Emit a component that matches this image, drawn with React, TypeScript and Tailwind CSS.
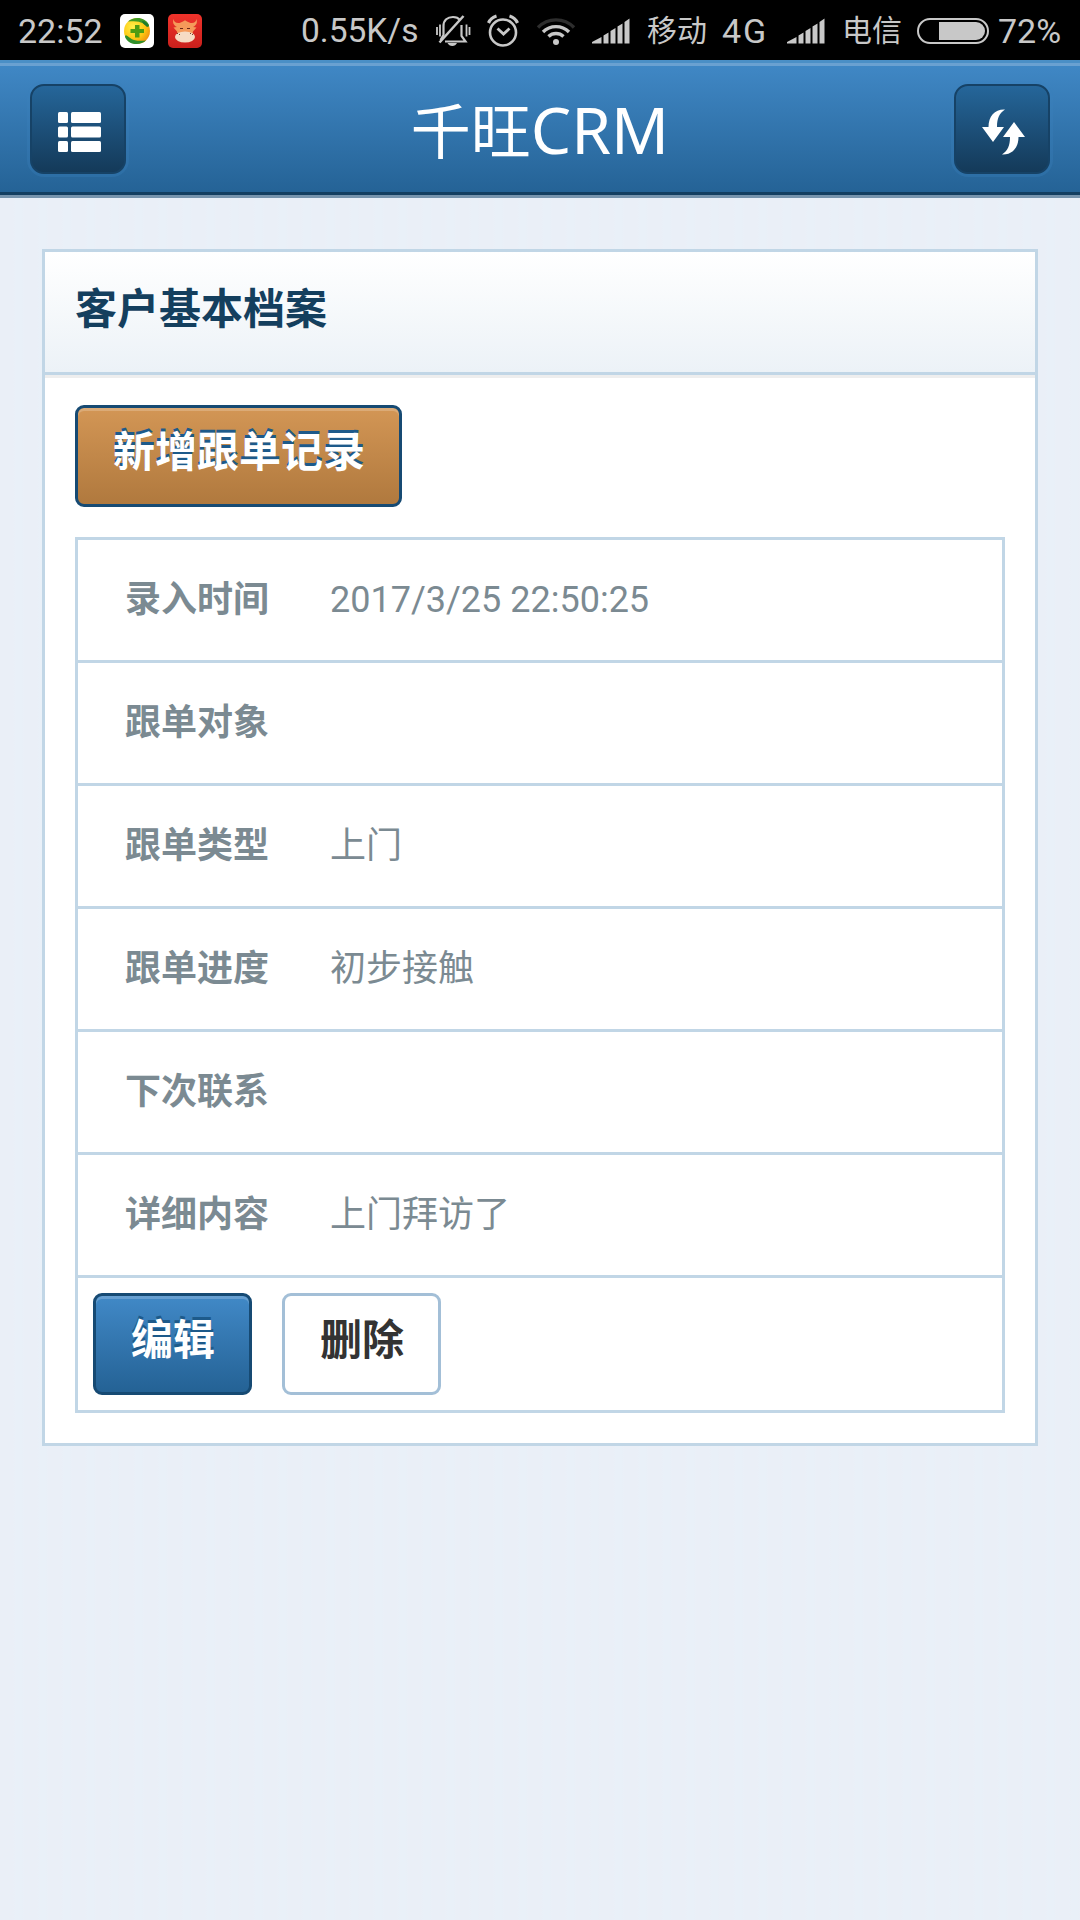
import type { ReactNode } from 'react'

type Field = {
  label: string
  value: string
}

const fields: Field[] = [
  { label: '录入时间', value: '2017/3/25 22:50:25' },
  { label: '跟单对象', value: '' },
  { label: '跟单类型', value: '上门' },
  { label: '跟单进度', value: '初步接触' },
  { label: '下次联系', value: '' },
  { label: '详细内容', value: '上门拜访了' },
]

function SecurityIcon() {
  return (
    <svg className="w-[34px] h-[34px]" viewBox="0 0 34 34">
      <defs>
        <radialGradient id="ball" cx="0.35" cy="0.35" r="0.75">
          <stop offset="0" stopColor="#fff04a" />
          <stop offset="0.6" stopColor="#fdc712" />
          <stop offset="1" stopColor="#f08a10" />
        </radialGradient>
      </defs>
      <rect width="34" height="34" rx="5" fill="#fff" />
      <circle cx="17" cy="17" r="13" fill="url(#ball)" />
      <path d="M8 7.500C13 2.500 25 2 29 11c0 1-.5 2-1.500 1.500C23 10 22 6 8 7.500Z" fill="#3f9a26" />
      <path d="M22 7c3 0 6 2 7 5l-2 1c-1-1.500-4-2.500-5-6Z" fill="#1f7a2c" />
      <path d="M26 26.500C21 31.500 9 32 5 23c0-1 .5-2 1.500-1.500C11 24 12 28 26 26.500Z" fill="#2f8f2c" />
      <path d="M15 11h4.500v4H24v4h-4.500v4.500H15V19h-4.500v-4H15z" fill="#4f9c12" />
    </svg>
  )
}

function OxIcon() {
  return (
    <svg className="w-[34px] h-[34px]" viewBox="0 0 34 34">
      <defs>
        <linearGradient id="red" x1="0" y1="0" x2="0" y2="1">
          <stop offset="0" stopColor="#f0332b" />
          <stop offset="1" stopColor="#c9201c" />
        </linearGradient>
      </defs>
      <rect width="34" height="34" rx="5" fill="url(#red)" />
      <path
        d="M5.500 5c.5 3 2.500 4.500 6 4L15 7.500l2-1.300 2 1.300L22.500 9c3.500.5 5.500-1 6-4 1.200 4-.5 6.500-3.500 8l3.500.5-3.500 4-.5 2.500h-15L9 17.500l-3.500-4L9 13C6 11.500 4.300 9 5.500 5Z"
        fill="#f59a5a"
      />
      <ellipse cx="17" cy="23" rx="10" ry="5.500" fill="#f6dcc4" />
      <path d="M12 14.500h3M19 14.500h3" stroke="#6b2a18" strokeWidth="1" />
      <path d="M9 19.500h1M11 20.500h1M22 19.500h1M24 20.500h1" stroke="#7a4030" strokeWidth="1" />
    </svg>
  )
}

function MuteIcon() {
  return (
    <svg className="w-[36px] h-[34px]" viewBox="0 0 36 34" fill="none" stroke="#c8c8c8" strokeWidth="2.200">
      <path d="M5.500 26L8.500 21V12C8.500 6 12.500 3 18 3c3 0 5.500 1 7 3" />
      <path d="M26.500 11v11l4 5.500H10" />
      <path d="M4.500 28.500L28.500 2" strokeWidth="2.500" />
      <path d="M12.500 29h9.500c-1 2-2.500 3-4.700 3s-3.800-1-4.800-3z" fill="#c8c8c8" stroke="none" />
      <path d="M2 13v8M5 10.500v12M34.500 13v8M31.500 10.500v12" strokeWidth="1.800" />
    </svg>
  )
}

function AlarmIcon() {
  return (
    <svg className="w-[32px] h-[34px]" viewBox="0 0 32 34" fill="none" stroke="#c8c8c8">
      <circle cx="16" cy="18.500" r="13" strokeWidth="2.600" />
      <path d="M10.500 14.500l6 5.500 6-5.500" strokeWidth="2.800" />
      <path d="M1.500 9C3 5.500 6 3 9.500 2M30.500 9C29 5.500 26 3 22.500 2" strokeWidth="3.200" />
    </svg>
  )
}

function WifiIcon() {
  return (
    <svg className="w-[40px] h-[30px]" viewBox="0 0 40 30" fill="none" stroke="#c8c8c8" strokeWidth="3.400">
      <path d="M2 11.500a25 25 0 0 1 36 0" stroke="#2e2e2e" />
      <path d="M7 16a18.500 18.500 0 0 1 26 0" />
      <path d="M12.500 20.500a11 11 0 0 1 15 0" />
      <circle cx="20" cy="26" r="3" fill="#c8c8c8" stroke="none" />
    </svg>
  )
}

function SignalIcon() {
  return (
    <svg className="w-[38px] h-[26px]" viewBox="0 0 38 26" fill="#c8c8c8">
      <path d="M0 25.500v-1.500L9.500 19v6.500zM11.500 17.500l5-3v11h-5zM18.500 13l5-3v15.500h-5zM25.500 8.500l5-3v20h-5zM32.500 4l5-3.500v25h-5z" />
    </svg>
  )
}

function StatusBar() {
  return (
    <div className="h-[60px] bg-black flex items-center text-[#c8c8c8] text-[34px] leading-[40px] whitespace-nowrap pt-[2px] font-['Roboto','Noto_Sans_CJK_SC',sans-serif]">
      <span className="ml-[18px] w-[102px]">22:52</span>
      <SecurityIcon />
      <span className="w-[14px]" />
      <OxIcon />
      <span className="ml-[99px] w-[134px] text-[33.500px]">0.55K/s</span>
      <MuteIcon />
      <span className="w-[16px]" />
      <AlarmIcon />
      <span className="w-[17px]" />
      <WifiIcon />
      <span className="w-[16px]" />
      <SignalIcon />
      <span className="ml-[17px] w-[75px] text-[30px]">移动</span>
      <span className="w-[65px] tracking-[2px]">4G</span>
      <SignalIcon />
      <span className="ml-[17px] w-[75px] text-[30px]">电信</span>
      <span className="w-[72px] h-[26px] rounded-full border-2 border-[#c8c8c8] flex justify-end p-[2px]">
        <span className="w-[46px] h-full rounded-r-full bg-[#c8c8c8]" />
      </span>
      <span className="ml-[9px]">72%</span>
    </div>
  )
}

function HeaderButton({ label, children }: { label: string; children: ReactNode }) {
  return (
    <button
      aria-label={label}
      className="w-[96px] h-[90px] rounded-[14px] border-2 border-[#164266] bg-linear-to-b from-[#25669a] to-[#143a59] shadow-[0_0_0_3px_rgba(60,130,190,0.3)] flex items-center justify-center"
    >
      {children}
    </button>
  )
}

function Header() {
  return (
    <header className="h-[138px] border-b-3 border-[#7794ad] bg-linear-to-b from-[#4189c7] to-[#246295] shadow-[inset_0_3px_0_#4a8fc6,inset_0_6px_0_#6aa1d1,inset_0_-3px_0_#143f61] flex items-start justify-between px-[30px] pt-[24px]">
      <HeaderButton label="菜单">
        <svg className="w-[43px] h-[40px] mt-[6px] ml-[2px]" viewBox="0 0 43 40" fill="#fff">
          <rect x="0" y="0" width="10" height="11" rx="1.500" />
          <rect x="13" y="0" width="30" height="11" rx="1.500" />
          <rect x="0" y="14.500" width="10" height="11" rx="1.500" />
          <rect x="13" y="14.500" width="30" height="11" rx="1.500" />
          <rect x="0" y="29" width="10" height="11" rx="1.500" />
          <rect x="13" y="29" width="30" height="11" rx="1.500" />
        </svg>
      </HeaderButton>
      <h1 className="text-white text-[60px] leading-[88px] font-normal font-['Noto_Sans_CJK_SC',sans-serif]">
        千旺<span className="text-[64px] font-['Noto_Sans',sans-serif]">CRM</span>
      </h1>
      <HeaderButton label="刷新">
        <svg className="w-[43px] h-[46px] mt-[6px] ml-[3px]" viewBox="0 0 43 46" fill="#fff">
          <path d="M23 0.500C13 0 6.500 7 6.500 18H0l11 15 11-15h-7C15 9 17.500 4 23 0.500Z" />
          <path d="M20 45.500C30 46 36.500 39 36.500 28H43L32 13 21 28h7C28 37 25.500 42 20 45.500Z" />
        </svg>
      </HeaderButton>
    </header>
  )
}

export default function App() {
  return (
    <div className="w-[1080px] h-[1920px] overflow-hidden bg-[#eaeff7] bg-[repeating-linear-gradient(90deg,#eaeff7_0px,#eaeff7_13px,#e9f0f8_16px,#e9f0f8_22px,#eaeff7_24px)] font-['Roboto','Noto_Sans_CJK_SC',sans-serif]">
      <StatusBar />
      <Header />
      <main className="mx-[42px] mt-[51px] border-3 border-[#c1d6e6] bg-white">
        <div className="h-[123px] border-b-3 border-[#c1d6e6] bg-linear-to-b from-white to-[#ecf2f7] pl-[30px] pt-[26px] shadow-[0_3px_0_#eee]">
          <h2 className="text-[42px] leading-[63px] font-bold text-[#143f5e]">客户基本档案</h2>
        </div>
        <div className="p-[30px]">
          <button className="block w-[327px] h-[102px] rounded-[9px] border-3 border-[#164a73] bg-linear-to-b from-[#d39655] to-[#b0793e] shadow-[inset_0_3px_0_rgba(255,255,255,0.2)] pb-[6px] pl-[1px] text-[42px] leading-[60px] font-bold text-white [text-shadow:0_-3px_0_#1d5a8a]">
            新增跟单记录
          </button>
          <div className="mt-[30px] border-3 border-[#c1d6e6]">
            {fields.map((field) => (
              <div
                key={field.label}
                className="h-[123px] flex items-center border-b-3 border-[#c1d6e6] pl-[47px] text-[36px] leading-[54px] text-[#7b8a92]"
              >
                <span className="w-[205px] pb-[1px] font-bold">{field.label}</span>
                <span>{field.value}</span>
              </div>
            ))}
            <div className="flex gap-[30px] p-[15px]">
              <button className="w-[159px] h-[102px] rounded-[9px] border-3 border-[#164a73] bg-linear-to-b from-[#4189c7] to-[#246295] shadow-[inset_0_3px_0_rgba(255,255,255,0.2)] pb-[6px] pl-[1px] text-[42px] leading-[60px] font-bold text-white [text-shadow:0_-3px_0_#1d5a8a]">
                编辑
              </button>
              <button className="w-[159px] h-[102px] rounded-[9px] border-3 border-[#a3bfd7] bg-white pb-[6px] pl-[1px] text-[42px] leading-[60px] font-bold text-[#333]">
                删除
              </button>
            </div>
          </div>
        </div>
      </main>
    </div>
  )
}
